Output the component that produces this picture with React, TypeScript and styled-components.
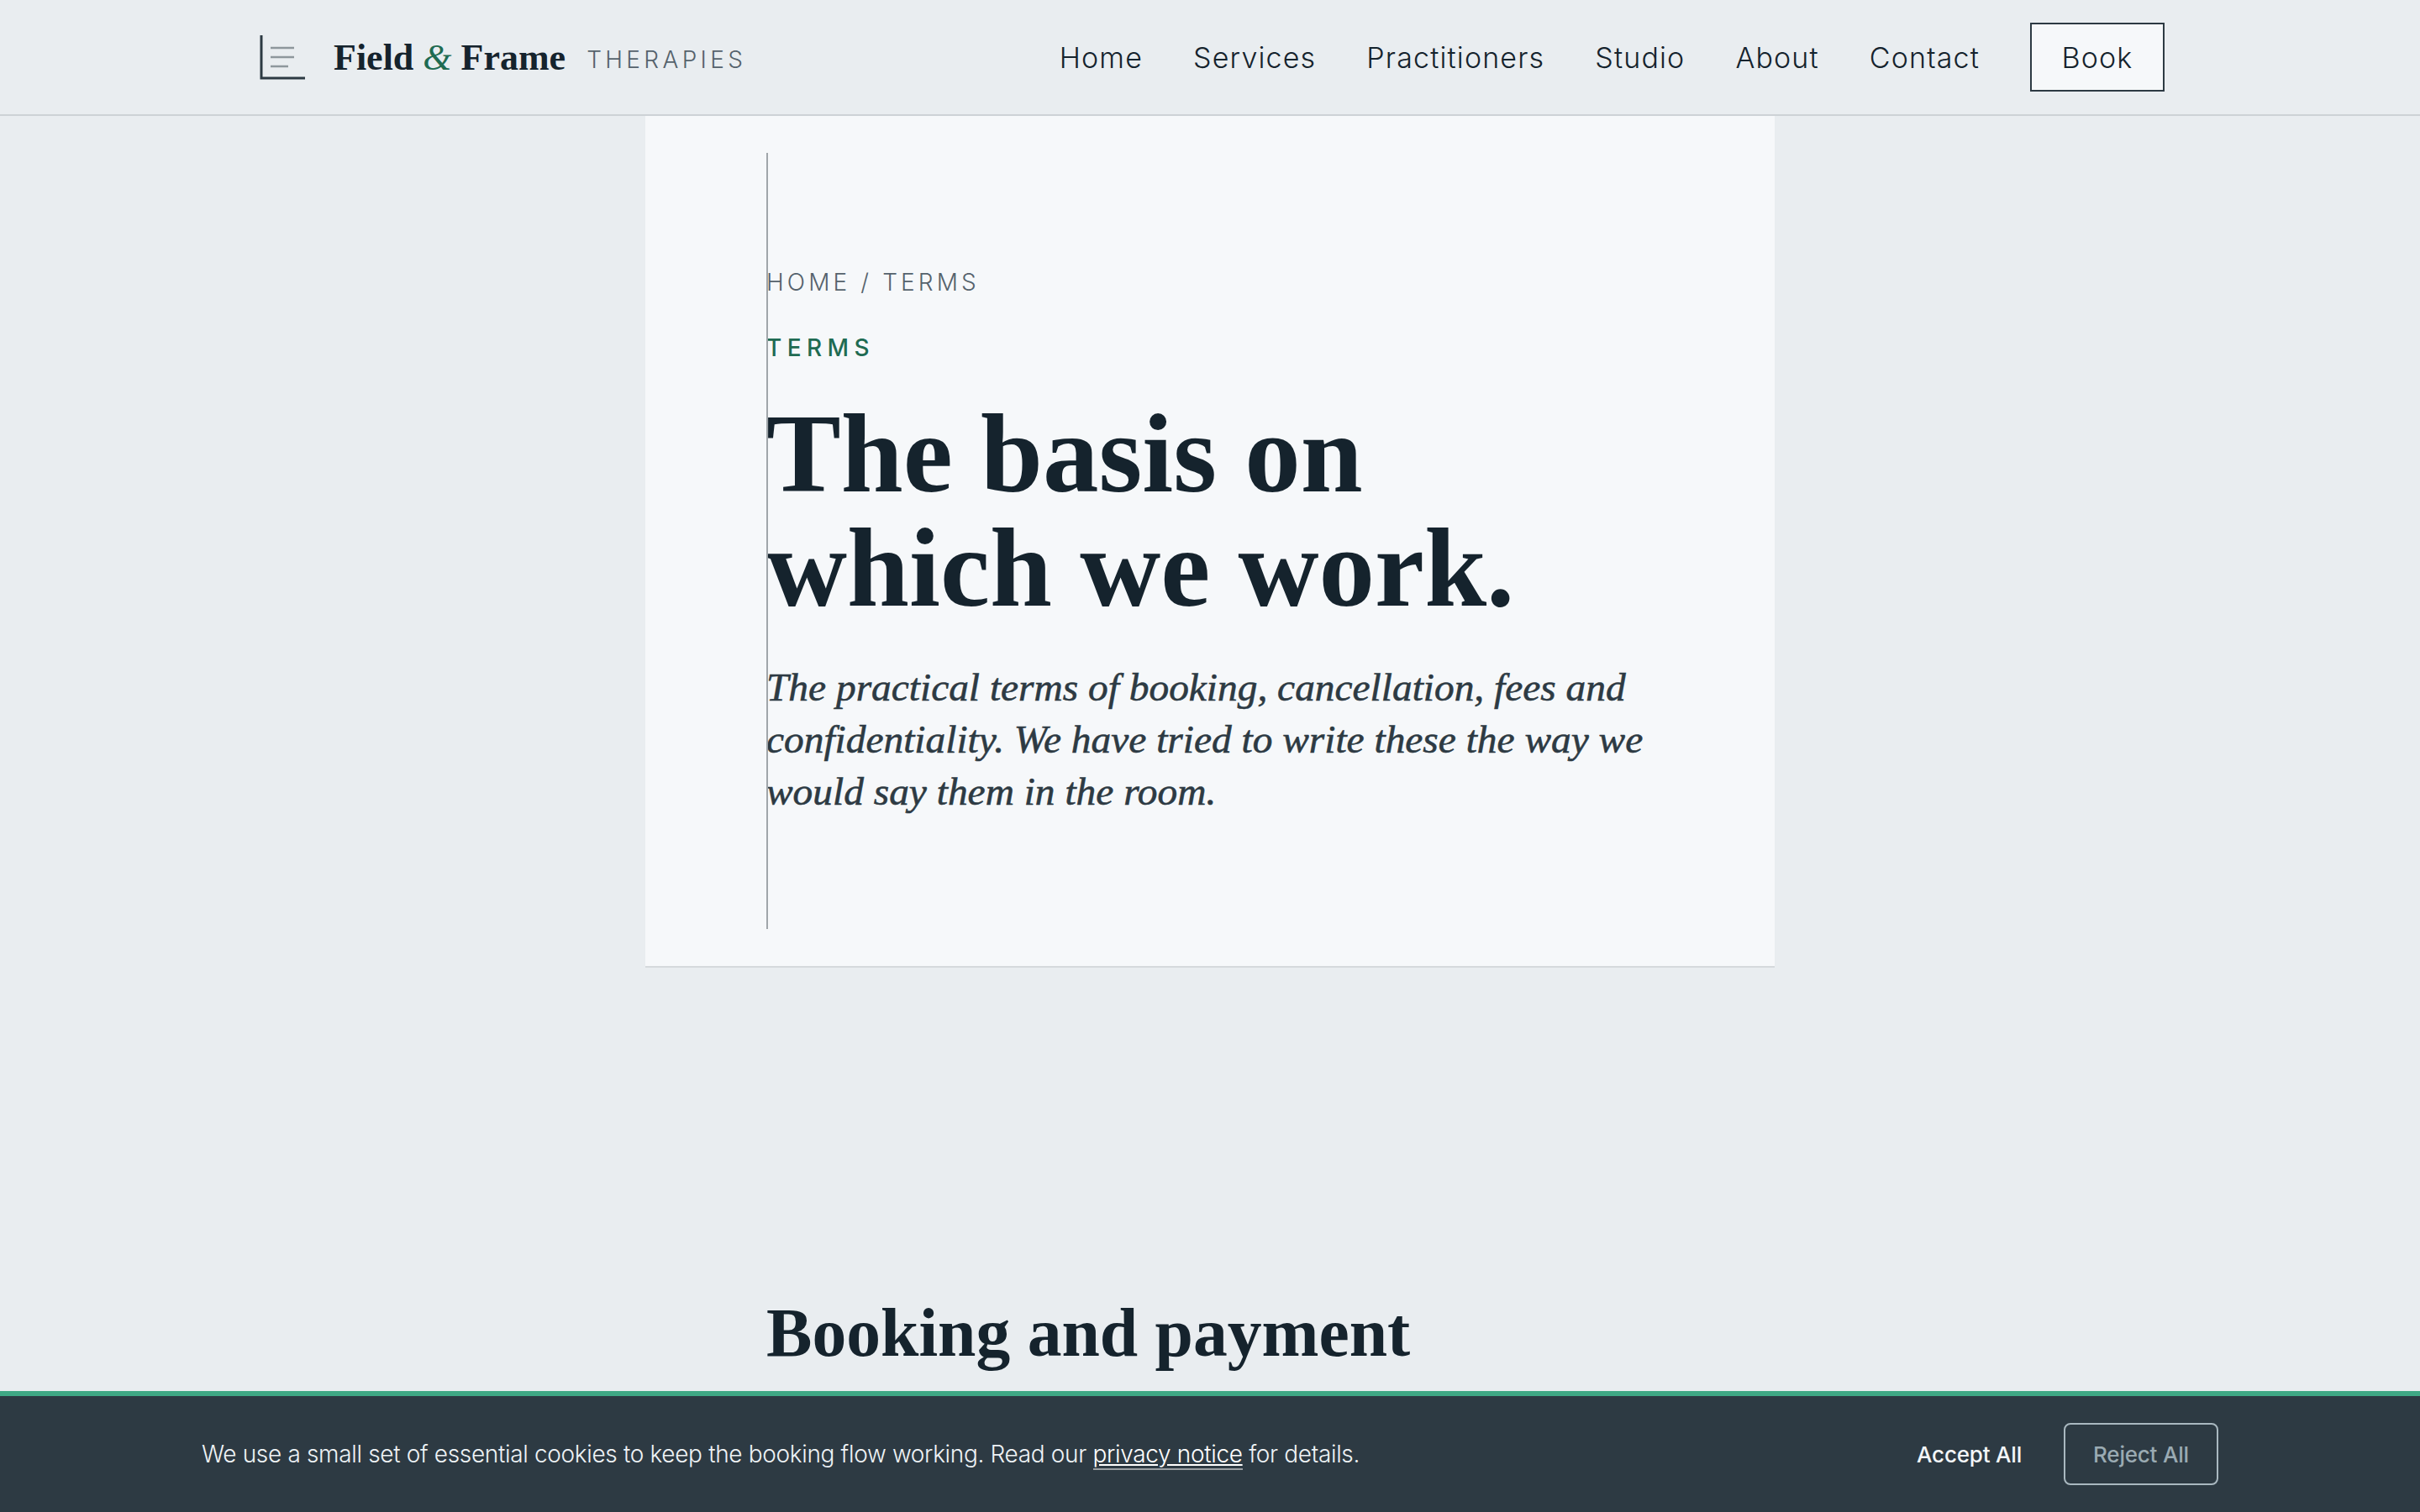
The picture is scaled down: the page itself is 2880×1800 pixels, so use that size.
import styled, { createGlobalStyle } from 'styled-components'

const serif = `'Liberation Serif', 'Times New Roman', serif`
const sans = `Inter, 'Noto Sans', sans-serif`

const colors = {
  page: '#e9edf0',
  card: '#f6f8fa',
  ink: '#15232d',
  slate: '#2d3a43',
  muted: '#55626c',
  green: '#1f6b52',
  accent: '#3fa885',
  rule: '#cdd2d6',
}

const GlobalStyle = createGlobalStyle`
  html, body {
    margin: 0;
    padding: 0;
    background: ${colors.page};
    color: ${colors.ink};
    font-family: ${sans};
  }
  * {
    box-sizing: border-box;
  }
`

const Header = styled.header`
  height: 138px;
  padding: 0 304px;
  display: flex;
  align-items: center;
  justify-content: space-between;
  border-bottom: 2px solid ${colors.rule};
`

const Brand = styled.a`
  display: flex;
  align-items: center;
`

const BrandName = styled.span`
  margin-left: 33px;
  font-family: ${serif};
  font-size: 44px;
  font-weight: 700;
  color: ${colors.ink};
  white-space: nowrap;

  em {
    color: ${colors.green};
    font-weight: 400;
  }
`

const BrandTag = styled.span`
  margin-left: 25px;
  margin-top: 6px;
  font-size: 28px;
  font-weight: 300;
  letter-spacing: 0.155em;
  color: ${colors.muted};
`

const Nav = styled.nav`
  display: flex;
  align-items: center;
  gap: 60px;
`

const NavLink = styled.a`
  font-size: 34px;
  font-weight: 300;
  letter-spacing: 1.15px;
  color: ${colors.ink};
`

const BookButton = styled.a`
  width: 160px;
  height: 82px;
  display: flex;
  align-items: center;
  justify-content: center;
  font-size: 34px;
  font-weight: 300;
  letter-spacing: 1.15px;
  color: ${colors.ink};
  background: ${colors.card};
  border: 2px solid ${colors.slate};
`

const Hero = styled.section`
  position: relative;
  width: 1344px;
  margin: 0 auto;
  padding: 178px 144px 177px;
  background: ${colors.card};
  border-bottom: 2px solid #d5d9dc;

  &::before {
    content: '';
    position: absolute;
    left: 144px;
    top: 44px;
    bottom: 44px;
    width: 2px;
    background: #a0a6aa;
  }
`

const Crumbs = styled.div`
  font-size: 28px;
  line-height: 40px;
  font-weight: 300;
  letter-spacing: 0.147em;
  color: ${colors.muted};
`

const Eyebrow = styled.div`
  margin-top: 38px;
  font-size: 28px;
  line-height: 40px;
  font-weight: 500;
  letter-spacing: 0.228em;
  color: ${colors.green};
`

const Title = styled.h1`
  margin: 38px 0 0;
  font-family: ${serif};
  font-size: 133px;
  line-height: 136px;
  font-weight: 700;
  color: ${colors.ink};
`

const Lede = styled.p`
  margin: 43px 0 0;
  font-family: ${serif};
  font-size: 47.4px;
  line-height: 62px;
  font-style: italic;
  color: ${colors.slate};
  -webkit-text-stroke: 0.6px ${colors.slate};
`

const Section = styled.section`
  width: 1344px;
  margin: 0 auto;
  padding: 391px 144px 200px;
`

const SectionTitle = styled.h2`
  margin: 0;
  font-family: ${serif};
  font-size: 81.6px;
  line-height: 88px;
  font-weight: 700;
  color: ${colors.ink};
`

const CookieBar = styled.aside`
  position: fixed;
  left: 0;
  right: 0;
  bottom: 0;
  height: 144px;
  padding: 0 240px;
  display: flex;
  align-items: center;
  justify-content: space-between;
  background: ${colors.slate};
  border-top: 6px solid ${colors.accent};
`

const CookieText = styled.p`
  margin: 0;
  font-size: 28px;
  font-weight: 300;
  letter-spacing: -0.34px;
  color: #eef2f5;
`

const CookieLink = styled.a`
  color: #fff;
  text-decoration: underline;
  border-bottom: 2px solid #9a9fa3;
`

const CookieActions = styled.div`
  display: flex;
  align-items: center;
  gap: 50px;
`

const AcceptButton = styled.button`
  padding: 0;
  border: 0;
  background: none;
  font-family: ${sans};
  font-size: 26px;
  font-weight: 500;
  letter-spacing: -0.2px;
  color: #f3f6f8;
`

const RejectButton = styled.button`
  width: 184px;
  height: 74px;
  padding: 0;
  border: 2px solid #a9b8c0;
  border-radius: 8px;
  background: none;
  font-family: ${sans};
  font-size: 26px;
  font-weight: 500;
  letter-spacing: -0.2px;
  color: #9aaab2;
`

const LogoMark = () => (
  <svg width="60" height="60" viewBox="0 0 60 60" fill="none">
    <path d="M7 4V55H59" stroke={colors.slate} strokeWidth="3" />
    <path d="M18 19H46M18 30H46M18 41H39" stroke="#8e979c" strokeWidth="2.5" />
  </svg>
)

const navItems = ['Home', 'Services', 'Practitioners', 'Studio', 'About', 'Contact']

export default function App() {
  return (
    <>
      <GlobalStyle />
      <Header>
        <Brand>
          <LogoMark />
          <BrandName>
            Field <em>&amp;</em> Frame
          </BrandName>
          <BrandTag>THERAPIES</BrandTag>
        </Brand>
        <Nav>
          {navItems.map((item) => (
            <NavLink key={item}>{item}</NavLink>
          ))}
          <BookButton>Book</BookButton>
        </Nav>
      </Header>
      <main>
        <Hero>
          <Crumbs>HOME / TERMS</Crumbs>
          <Eyebrow>TERMS</Eyebrow>
          <Title>
            The basis on
            <br />
            which we work.
          </Title>
          <Lede>
            The practical terms of booking, cancellation, fees and
            <br />
            confidentiality. We have tried to write these the way we
            <br />
            would say them in the room.
          </Lede>
        </Hero>
        <Section>
          <SectionTitle>Booking and payment</SectionTitle>
        </Section>
      </main>
      <CookieBar>
        <CookieText>
          We use a small set of essential cookies to keep the booking flow working. Read our{' '}
          <CookieLink>privacy notice</CookieLink> for details.
        </CookieText>
        <CookieActions>
          <AcceptButton>Accept All</AcceptButton>
          <RejectButton>Reject All</RejectButton>
        </CookieActions>
      </CookieBar>
    </>
  )
}
